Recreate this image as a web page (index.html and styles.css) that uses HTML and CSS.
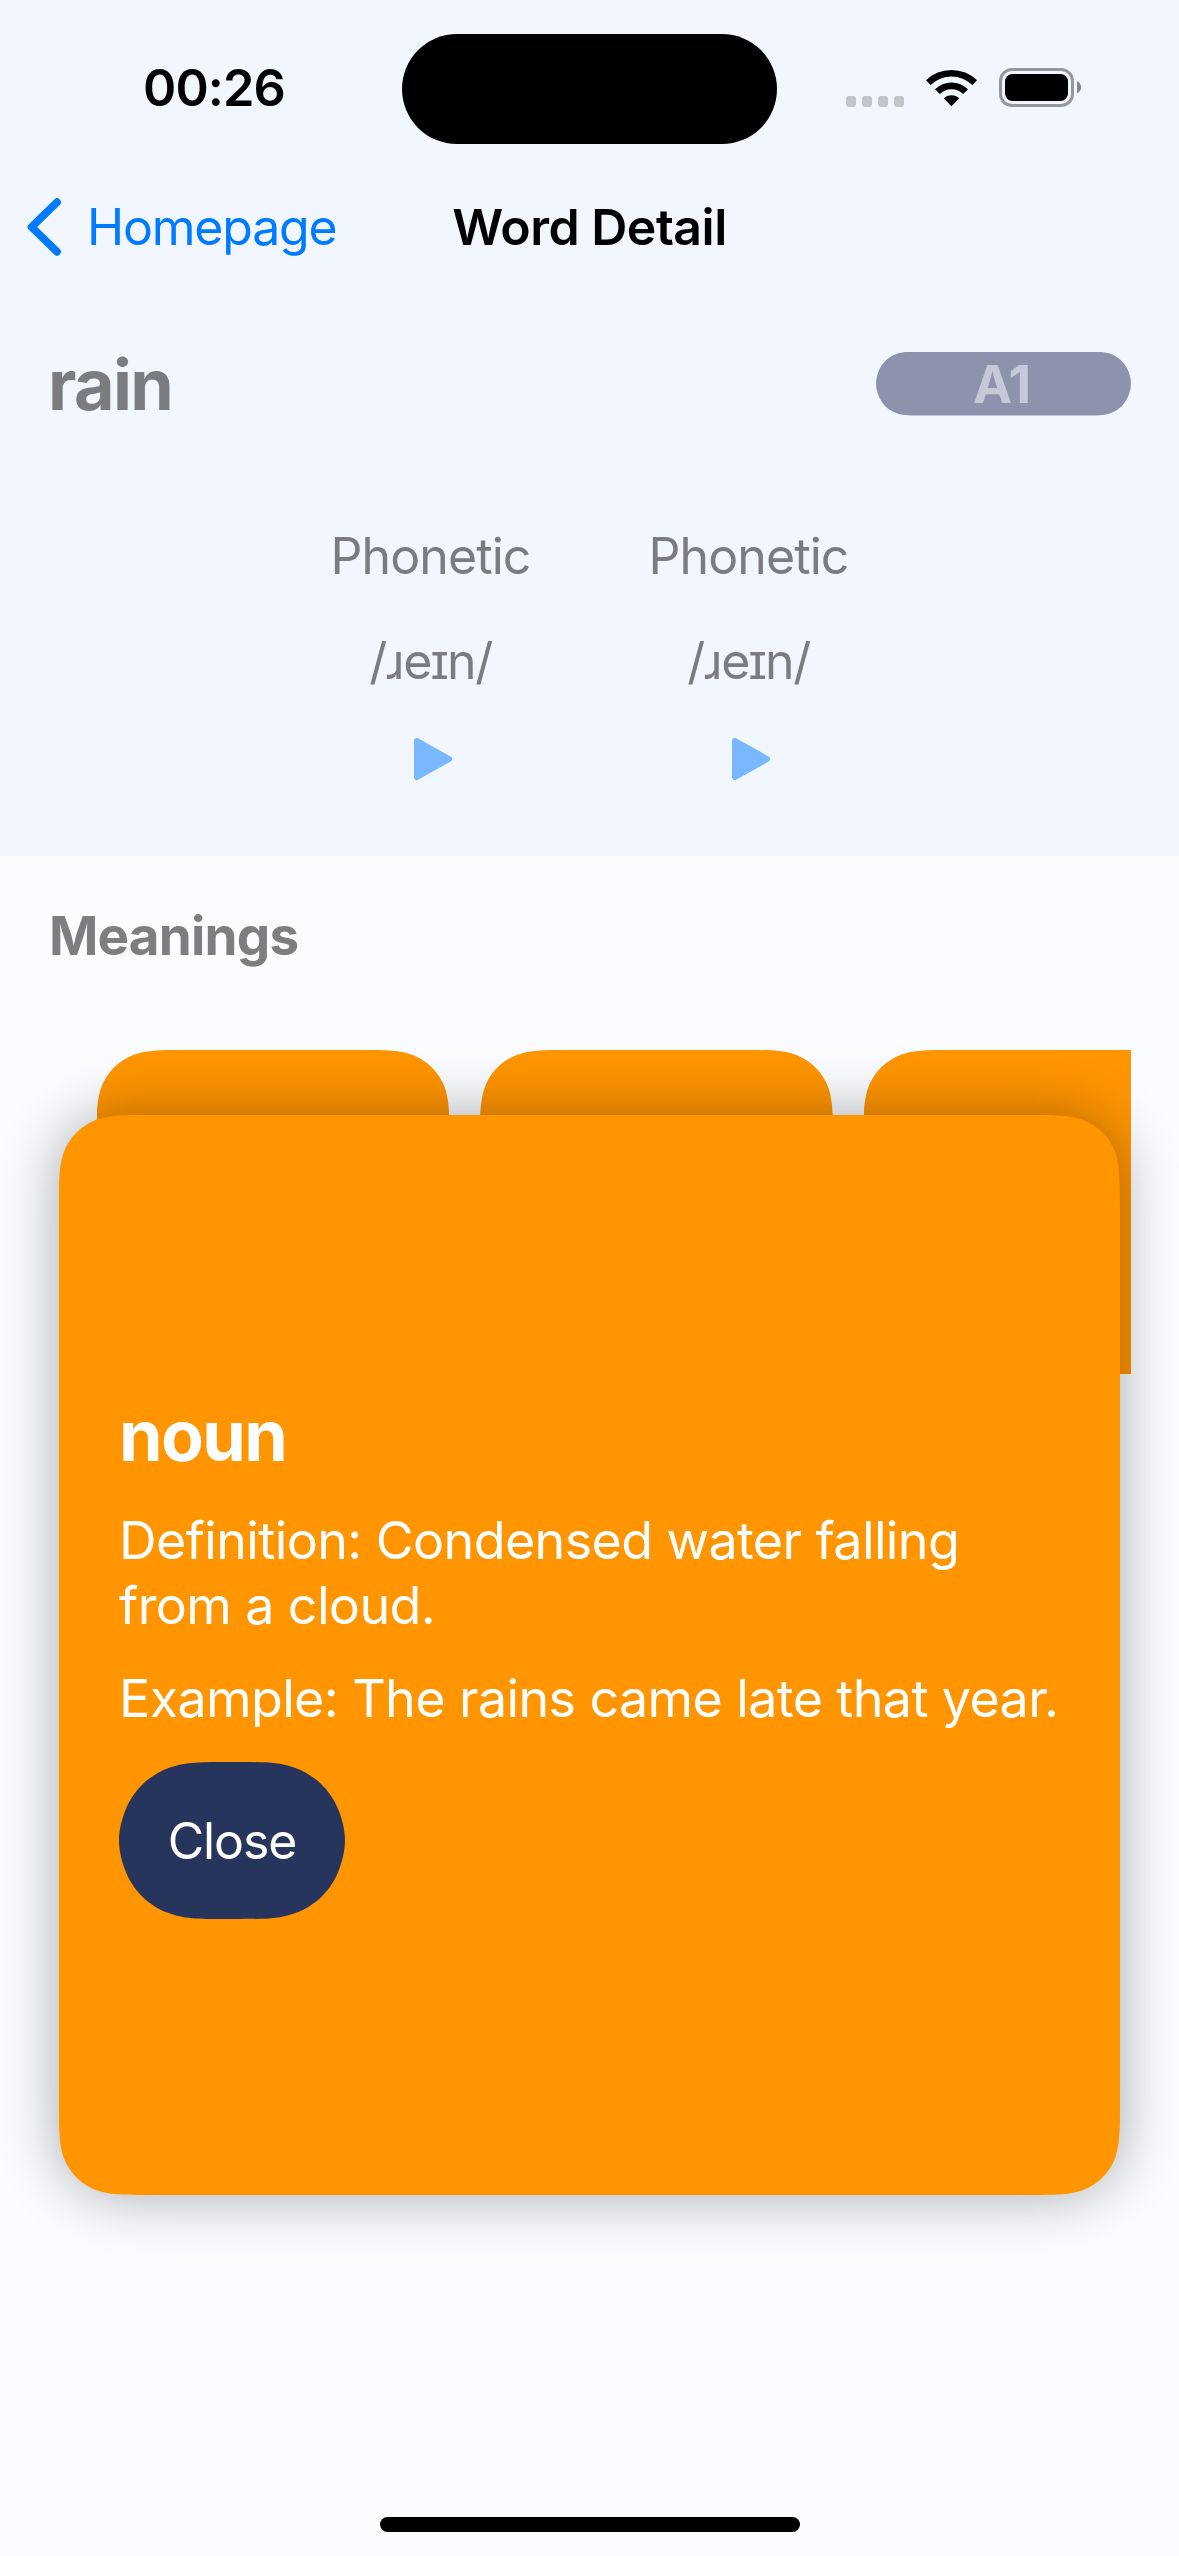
FILE: index.html
```html
<!DOCTYPE html>
<html lang="en">
<head>
<meta charset="utf-8">
<title>Word Detail</title>
<link rel="stylesheet" href="styles.css">
</head>
<body>
<main class="screen">
  <section class="top">
    <div class="status">
      <span class="time">00:26</span>
      <span class="island"></span>
      <span class="dots"><i></i><i></i><i></i><i></i></span>
      <svg class="wifi" width="51" height="38" viewBox="0 0 51 38">
        <path d="M0 11.3 A36.5 36.5 0 0 1 51 11.3 L46.4 16 A30 30 0 0 0 4.6 16 Z"/>
        <path d="M9 20.3 A23.4 23.4 0 0 1 42 20.3 L37.2 25.1 A16.6 16.6 0 0 0 13.8 25.1 Z"/>
        <path d="M17.8 29.3 A11 11 0 0 1 33.2 29.3 L25.5 37.3 Z"/>
      </svg>
      <svg class="battery" width="82" height="39" viewBox="0 0 82 39">
        <rect x="1.5" y="1.5" width="72" height="36" rx="11.5" fill="none" stroke="#94979c" stroke-width="3"/>
        <rect x="6" y="6" width="63" height="27" rx="7.5"/>
        <path d="M78 13 Q82 15 82 19.2 T78 25.5 Z" fill="#83868a"/>
      </svg>
    </div>
    <nav class="nav">
      <a class="back">
        <svg width="35" height="58" viewBox="0 0 35 58"><path d="M30 4.2 L4.6 29 L30 53.8" fill="none" stroke="#007aff" stroke-width="7.8" stroke-linecap="round" stroke-linejoin="round"/></svg>
        <span>Homepage</span>
      </a>
      <h1 class="title">Word Detail</h1>
    </nav>
    <header class="word-row">
      <h2 class="word">rain</h2>
      <span class="level"><b>A1</b></span>
    </header>
    <div class="phonetics">
      <div class="phonetic">
        <span class="label">Phonetic</span>
        <span class="ipa">/ɹeɪn/</span>
        <svg class="play" width="38" height="42" viewBox="0 0 38 42"><path d="M3 3 L35 21 L3 39 Z"/></svg>
      </div>
      <div class="phonetic">
        <span class="label">Phonetic</span>
        <span class="ipa">/ɹeɪn/</span>
        <svg class="play" width="38" height="42" viewBox="0 0 38 42"><path d="M3 3 L35 21 L3 39 Z"/></svg>
      </div>
    </div>
  </section>

  <section class="meanings">
    <h2 class="heading">Meanings</h2>
    <div class="strip">
      <div class="tile"></div>
      <div class="tile"></div>
      <div class="tile"></div>
    </div>
  </section>

  <article class="popup">
    <h2 class="pos">noun</h2>
    <p class="definition">Definition: Condensed water falling<br>from a cloud.</p>
    <p class="example">Example: The rains came late that year.</p>
    <button class="close">Close</button>
  </article>

  <div class="home-bar"></div>
</main>
</body>
</html>
```

FILE: styles.css
```css
* { box-sizing: border-box; margin: 0; padding: 0; }

body {
  font-family: Inter, "Liberation Sans", sans-serif;
  background: #fafcff;
}

.screen {
  position: relative;
  display: flex;
  flex-direction: column;
  width: 1179px;
  height: 2556px;
  overflow: hidden;
  background: #fafcff;
}

.top {
  height: 856px;
  background: #f2f7ff;
}

/* status bar */
.status {
  display: flex;
  height: 177px;
}
.time {
  width: 259px;
  margin-left: 143px;
  margin-top: 58px;
  font-size: 50.5px;
  line-height: 60px;
  font-weight: 600;
  letter-spacing: -0.9px;
}
.island {
  width: 375px;
  height: 110px;
  margin-top: 34px;
  border-radius: 55px;
  background: #000;
}
.dots {
  display: flex;
  gap: 6px;
  margin: 96px 0 0 69px;
}
.dots i {
  width: 10px;
  height: 11px;
  border-radius: 3px;
  background: #c2c5ca;
}
.wifi { margin: 69px 0 0 22px; }
.battery { margin: 68px 0 0 22px; }

/* navigation bar */
.nav {
  display: grid;
  grid-template-columns: 1fr auto 1fr;
  align-items: center;
  height: 132px;
  padding-bottom: 32px;
}
.back {
  display: flex;
  align-items: center;
  gap: 25px;
  padding-left: 27px;
  color: #007aff;
  font-size: 50px;
  line-height: 60px;
  letter-spacing: -1.2px;
}
.title {
  font-size: 50px;
  line-height: 60px;
  font-weight: 600;
  letter-spacing: -0.5px;
}

/* word header */
.word-row {
  display: flex;
  align-items: center;
  justify-content: space-between;
  height: 85px;
  margin-top: 32px;
  padding: 0 48px;
}
.word {
  padding-top: 2px;
  font-size: 70px;
  line-height: 85px;
  font-weight: 700;
  letter-spacing: -1.6px;
  color: #7a7c80;
}
.level {
  display: flex;
  align-items: center;
  justify-content: center;
  width: 255px;
  height: 64px;
  padding-right: 4px;
  background: #8d93ad;
  clip-path: path("M49 0 H206 C220.2 0 227.2 0 233.6 2.1 L234.8 2.4 C243.1 5.4 249.6 11.9 252.6 20.2 C253.9 23.7 255 27.8 255 32 C255 36.2 253.9 40.3 252.6 43.8 C249.6 52.1 243.1 58.6 234.8 61.6 L233.6 61.9 C227.2 64 220.2 64 206 64 H49 C34.8 64 27.8 64 21.4 61.9 L20.2 61.6 C11.9 58.6 5.4 52.1 2.4 43.8 C1.1 40.3 0 36.2 0 32 C0 27.8 1.1 23.7 2.4 20.2 C5.4 11.9 11.9 5.4 20.2 2.4 L21.4 2.1 C27.8 0 34.8 0 49 0 Z");
}
.level b {
  font-size: 52.5px;
  line-height: 64px;
  font-weight: 700;
  letter-spacing: -1.2px;
  color: #c6cad8;
}

.phonetics {
  display: flex;
  justify-content: center;
  gap: 120px;
  margin-top: 100px;
  color: #7a7c80;
}
.phonetic {
  display: flex;
  flex-direction: column;
  align-items: center;
  width: 198px;
  font-size: 50px;
  line-height: 60px;
  letter-spacing: -0.9px;
  white-space: nowrap;
}
.ipa {
  margin-top: 45px;
  letter-spacing: -1.5px;
}
.play {
  margin: 47px 0 0 4px;
  fill: #79b7ff;
  stroke: #79b7ff;
  stroke-width: 6;
  stroke-linejoin: round;
}

/* meanings */
.meanings { padding: 48px 48px 0; }
.heading {
  padding-left: 1px;
  font-size: 53px;
  line-height: 64px;
  font-weight: 650;
  letter-spacing: -0.8px;
  color: #7d7e80;
}
.strip {
  display: flex;
  gap: 30.5px;
  height: 324px;
  margin-top: 82px;
  padding-left: 48.5px;
  overflow: hidden;
}
.tile {
  flex: 0 0 353px;
  height: 324px;
  background: #ff9500;
  clip-path: path("M91.7 0 H261.3 C287.7 0 300.9 0 312.8 3.9 L315.1 4.5 C330.6 10.1 342.9 22.4 348.5 37.9 C353 52.1 353 65.3 353 91.7 V324 H0 V91.7 C0 65.3 0 52.1 4.5 37.9 C10.1 22.4 22.4 10.1 37.9 4.5 L40.2 3.9 C52.1 0 65.3 0 91.7 0 Z");
}

/* meaning popup over the page */
.popup {
  position: absolute;
  left: 59px;
  top: 1115px;
  z-index: 1;
  width: 1061px;
  height: 1080px;
  padding: 278px 60px 0;
  color: #fff;
  white-space: nowrap;
}
.popup::before,
.popup::after {
  content: "";
  position: absolute;
  inset: 0;
  z-index: -1;
}
.popup::before {
  border-radius: 64px;
  background: #000;
  opacity: 0.33;
  filter: blur(30px);
}
.popup::after {
  background: #ff9500;
  clip-path: path("M91.7 0 H969.3 C995.7 0 1008.9 0 1020.8 3.9 L1023.1 4.5 C1038.6 10.1 1050.9 22.4 1056.5 37.9 C1061 52.1 1061 65.3 1061 91.7 V988.3 C1061 1014.7 1061 1027.9 1056.5 1042.1 C1050.9 1057.6 1038.6 1069.9 1023.1 1075.5 L1020.8 1076.1 C1008.9 1080 995.7 1080 969.3 1080 H91.7 C65.3 1080 52.1 1080 40.2 1076.1 L37.9 1075.5 C22.4 1069.9 10.1 1057.6 4.5 1042.1 C0 1027.9 0 1014.7 0 988.3 V91.7 C0 65.3 0 52.1 4.5 37.9 C10.1 22.4 22.4 10.1 37.9 4.5 L40.2 3.9 C52.1 0 65.3 0 91.7 0 Z");
}
.pos {
  font-size: 70px;
  line-height: 85px;
  font-weight: 700;
  letter-spacing: -1.6px;
}
.definition,
.example {
  font-size: 52px;
  line-height: 65px;
  letter-spacing: -0.62px;
}
.definition { margin-top: 30px; }
.example { margin-top: 28px; }
.close {
  display: block;
  width: 226px;
  height: 157px;
  margin-top: 31px;
  border: 0;
  background: #27355d;
  color: #fff;
  font: 400 50px/60px Inter, "Liberation Sans", sans-serif;
  letter-spacing: -1.1px;
  clip-path: path("M113 0 C145 0 159 0 173.4 5.1 L176.4 5.9 C196.7 13.3 212.7 29.3 220.1 49.6 C223.3 58.1 226 68.3 226 78.5 C226 88.7 223.3 98.9 220.1 107.4 C212.7 127.7 196.7 143.7 176.4 151.1 L173.4 151.9 C159 157 145 157 113 157 C81 157 67 157 52.6 151.9 L49.6 151.1 C29.3 143.7 13.3 127.7 5.9 107.4 C2.7 98.9 0 88.7 0 78.5 C0 68.3 2.7 58.1 5.9 49.6 C13.3 29.3 29.3 13.3 49.6 5.9 L52.6 5.1 C67 0 81 0 113 0 Z");
}

.home-bar {
  width: 420px;
  height: 15px;
  margin: auto auto 24px;
  border-radius: 8px;
  background: #000;
}
```
